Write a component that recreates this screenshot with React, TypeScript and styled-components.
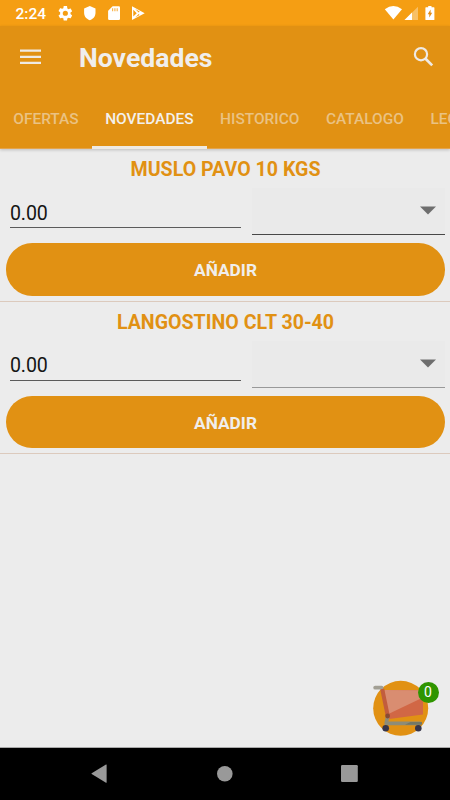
import React from "react";
import styled, { createGlobalStyle } from "styled-components";

const ORANGE = "#e19113";
const LIGHT = "#ececec";

const GlobalStyle = createGlobalStyle`
  *, *::before, *::after { box-sizing: border-box; }
  body { margin: 0; background: ${LIGHT}; }
  button, input { font: inherit; border: 0; padding: 0; background: none; color: inherit; }
  svg { display: block; flex: none; }
`;

const Screen = styled.div`
  position: relative;
  display: flex;
  flex-direction: column;
  width: 450px;
  height: 800px;
  overflow: hidden;
  background: ${LIGHT};
  font-family: Roboto, "Liberation Sans", sans-serif;
`;

const StatusBar = styled.div`
  display: flex;
  justify-content: space-between;
  flex: none;
  height: 26px;
  padding: 0 15px 0 15.5px;
  background: #f59e13;
  color: #fff;
`;

const StatusGroup = styled.div`
  display: flex;
  align-items: center;
`;

const Clock = styled.span`
  width: 42.5px;
  font-size: 15.5px;
  font-weight: 500;
  line-height: 26px;
  padding-top: 2px;
`;

const Header = styled.header`
  flex: none;
  height: 123px;
  background: ${ORANGE};
  box-shadow: 0 1px 3px rgba(0, 0, 0, 0.2);
  border-bottom: 1px solid #e4a44c;
`;

const AppBar = styled.div`
  display: flex;
  align-items: center;
  height: 62px;
  padding: 0 16px 0 20px;
`;

const IconButton = styled.button`
  display: flex;
`;

const Title = styled.h1`
  flex: 1;
  margin: 2px 0 0 38px;
  color: #f0eeec;
  font-size: 26.6px;
  font-weight: 700;
  line-height: 32px;
`;

const Tabs = styled.nav`
  display: flex;
  height: 61px;
  overflow: hidden;
`;

const Tab = styled.button<{ $active?: boolean }>`
  flex: none;
  height: 61px;
  padding: 3px 13.3px 0;
  border-bottom: 3px solid ${(p) => (p.$active ? "#eeeae4" : "transparent")};
  color: ${(p) => (p.$active ? "#f3f0ec" : "#eac283")};
  font-size: 15.43px;
  font-weight: 500;
  white-space: nowrap;
`;

const List = styled.main`
  flex: 1;
`;

const Item = styled.article`
  height: 152.5px;
  padding: 7px 5px 0 6px;
  border-bottom: 1px solid #dccabd;
`;

const ItemName = styled.h2`
  margin: 0;
  height: 32px;
  color: ${ORANGE};
  font-size: 19.6px;
  font-weight: 700;
  line-height: 27px;
  text-align: center;
`;

const Fields = styled.div`
  display: flex;
  justify-content: space-between;
  padding-left: 4px;
  height: 47px;
`;

const Quantity = styled.input`
  width: 231px;
  height: 40px;
  border-bottom: 1px solid #5b5b5b;
  border-radius: 0;
  outline: 0;
  padding-top: 11px;
  color: #151515;
  font-size: 19.6px;
  letter-spacing: -0.15px;
`;

const Picker = styled.div<{ $line: string }>`
  display: flex;
  justify-content: flex-end;
  width: 193px;
  height: 47px;
  padding: 18px 9px 0 0;
  background: #eaeaea;
  border-bottom: 1px solid ${(p) => p.$line};
`;

const AddButton = styled.button`
  display: block;
  width: 439px;
  height: 52.5px;
  margin-top: 8px;
  border-radius: 26.25px;
  background: ${ORANGE};
  color: #f0eeec;
  font-size: 17.3px;
  font-weight: 700;
  line-height: 54px;
  text-align: center;
`;

const CartButton = styled.button`
  position: absolute;
  left: 370px;
  top: 678px;
  width: 70px;
  height: 60px;
`;

const Badge = styled.span`
  position: absolute;
  left: 47.5px;
  top: 3.5px;
  width: 21px;
  height: 21px;
  border-radius: 50%;
  background: #2f9500;
  color: #fff;
  font-size: 14px;
  line-height: 21px;
  text-align: center;
`;

const NavBar = styled.footer`
  flex: none;
  display: flex;
  justify-content: space-between;
  align-items: center;
  height: 53px;
  padding: 0 91px 0 90px;
  border-top: 1px solid #a8a8a8;
  background: #000;
`;

const tabs = ["OFERTAS", "NOVEDADES", "HISTORICO", "CATALOGO", "LEGAL"];
const products = [
  { name: "MUSLO PAVO 10 KGS", line: "#484848" },
  { name: "LANGOSTINO CLT 30-40", line: "#999" },
];

const StatusIcons = () => (
  <svg width="90" height="26" viewBox="0 0 90 26" fill="#fff">
    <g transform="translate(-1.3 4.6) scale(.72)">
      <path d="M19.14 12.94c.04-.3.06-.61.06-.94s-.02-.64-.07-.94l2.03-1.58a.49.49 0 0 0 .12-.61l-1.92-3.32a.49.49 0 0 0-.59-.22l-2.39.96a7 7 0 0 0-1.62-.94l-.36-2.54A.48.48 0 0 0 13.92 2h-3.84a.48.48 0 0 0-.47.41l-.36 2.54a7 7 0 0 0-1.62.94l-2.39-.96a.48.48 0 0 0-.59.22L2.74 8.47a.48.48 0 0 0 .12.61l2.03 1.58a6 6 0 0 0 0 2.68l-2.03 1.58a.49.49 0 0 0-.12.61l1.92 3.32c.12.22.37.29.59.22l2.39-.96c.5.38 1.03.7 1.62.94l.36 2.54c.05.24.24.41.48.41h3.84c.24 0 .44-.17.47-.41l.36-2.54a7 7 0 0 0 1.62-.94l2.39.96c.22.08.47 0 .59-.22l1.92-3.32a.48.48 0 0 0-.12-.61zM12 15.6a3.6 3.6 0 1 1 0-7.2 3.6 3.6 0 0 1 0 7.2z" />
    </g>
    <path d="M31.8 6 37.5 8.5v4.2c0 3.6-2.3 6.3-5.7 7.5-3.4-1.2-5.7-3.9-5.7-7.5V8.5z" />
    <path d="M54.6 6.3h6.2q1.2 0 1.2 1.2v11.3q0 1.2-1.2 1.2H51.3q-1.2 0-1.2-1.2v-8.1z" />
    <path d="M54 8.2h1.2v3H54zm2.3 0h1.2v3h-1.2zm2.3 0h1.2v3h-1.2z" fill="#f8b650" />
    <path d="M74 6.3 86.7 13.2 74 20.1z" />
    <path d="m75.3 9.8 3.4 3.4-3.4 3.4zM77.2 9l4.4 2.5-.9.9zM77.2 17.4l4.4-2.5-.9-.9z" fill="#f59e13" />
  </svg>
);

const SignalIcons = () => (
  <svg width="51" height="26" viewBox="384 0 51 26" fill="#fff">
    <path d="M384.8 9.2q8.6-6.5 17.2 0L393.4 19.4z" />
    <path d="M418 6.7V20h-13.5z" opacity=".35" />
    <path d="M412 12.6V20h-7.5z" />
    <path d="M428.2 5.9h3.3v1.4h2.4q.5 0 .5.6v11.6q0 .6-.5.6h-8q-.5 0-.5-.6V7.9q0-.6.5-.6h2.3z" />
    <path d="M430.6 9.5v3.2h1.6l-2.9 4.8v-3.2h-1.6z" fill="#e58d12" />
  </svg>
);

const MenuIcon = () => (
  <svg width="21" height="16" viewBox="0 0 21 16" fill="#efeae4">
    <path d="M0 .6h21v2.2H0zm0 6.1h21v2.2H0zm0 6.1h21V15H0z" />
  </svg>
);

const SearchIcon = () => (
  <svg width="21" height="21" viewBox="0 0 21 21" fill="none" stroke="#efeae4">
    <circle cx="8" cy="7.2" r="6.1" strokeWidth="2.2" />
    <path d="m12.3 11.5 6.9 6.9" strokeWidth="2.7" />
  </svg>
);

const CartIcon = () => (
  <svg width="70" height="60" viewBox="370 678 70 60">
    <circle cx="400.7" cy="708.3" r="27.5" fill={ORANGE} />
    <path d="m384.3 690 38.7.2v24.3l-35.8 4.8z" fill="#d16745" />
    <path d="m384.3 690 38.7.2v7.3l-36.2 17.2z" fill="#d98d71" />
    <path d="M375.2 687.7h6.4" fill="none" stroke="#a29f94" strokeWidth="3.8" strokeLinecap="round" />
    <path d="m382.2 689 5.6 27" fill="none" stroke="#c25d3d" strokeWidth="4" />
    <path d="m387.6 717-1.5 6.4h34.5" fill="none" stroke="#8d8c79" strokeWidth="3.6" strokeLinejoin="round" />
    <path d="m405 724.8 5.5-2.7H422v2.7z" fill="#747866" />
    <circle cx="387.6" cy="716" r="2.4" fill="#884b34" />
    <circle cx="385.7" cy="728.3" r="3.3" fill="#37354a" />
    <circle cx="418.3" cy="728.3" r="3.3" fill="#37354a" />
  </svg>
);

export default function App() {
  return (
    <>
      <GlobalStyle />
      <Screen>
        <StatusBar>
          <StatusGroup><Clock>2:24</Clock><StatusIcons /></StatusGroup>
          <StatusGroup><SignalIcons /></StatusGroup>
        </StatusBar>
        <Header>
          <AppBar>
            <IconButton aria-label="Menu"><MenuIcon /></IconButton>
            <Title>Novedades</Title>
            <IconButton aria-label="Buscar"><SearchIcon /></IconButton>
          </AppBar>
          <Tabs>
            {tabs.map((t) => <Tab key={t} $active={t === "NOVEDADES"}>{t}</Tab>)}
          </Tabs>
        </Header>
        <List>
          {products.map(({ name, line }) => (
            <Item key={name}>
              <ItemName>{name}</ItemName>
              <Fields>
                <Quantity defaultValue="0.00" aria-label="Cantidad" />
                <Picker $line={line}>
                  <svg width="16" height="9" viewBox="0 0 16 9"><path d="M0 .5h16L8 8.6z" fill="#6e6e6e" /></svg>
                </Picker>
              </Fields>
              <AddButton>AÑADIR</AddButton>
            </Item>
          ))}
        </List>
        <CartButton aria-label="Carrito"><CartIcon /><Badge>0</Badge></CartButton>
        <NavBar>
          <svg width="18" height="20" viewBox="0 0 18 20"><path d="M16.6.8v17.6q0 .5-.6.3L1.7 10q-.5-.4 0-.8L16 .5q.6-.2.6.3z" fill="#999" /></svg>
          <svg width="16" height="16" viewBox="0 0 16 16"><circle cx="7.8" cy="7.8" r="7.8" fill="#999" /></svg>
          <svg width="18" height="18" viewBox="0 0 18 18"><rect x="0" y="0" width="16.8" height="16.9" rx="1.2" fill="#999" /></svg>
        </NavBar>
      </Screen>
    </>
  );
}
